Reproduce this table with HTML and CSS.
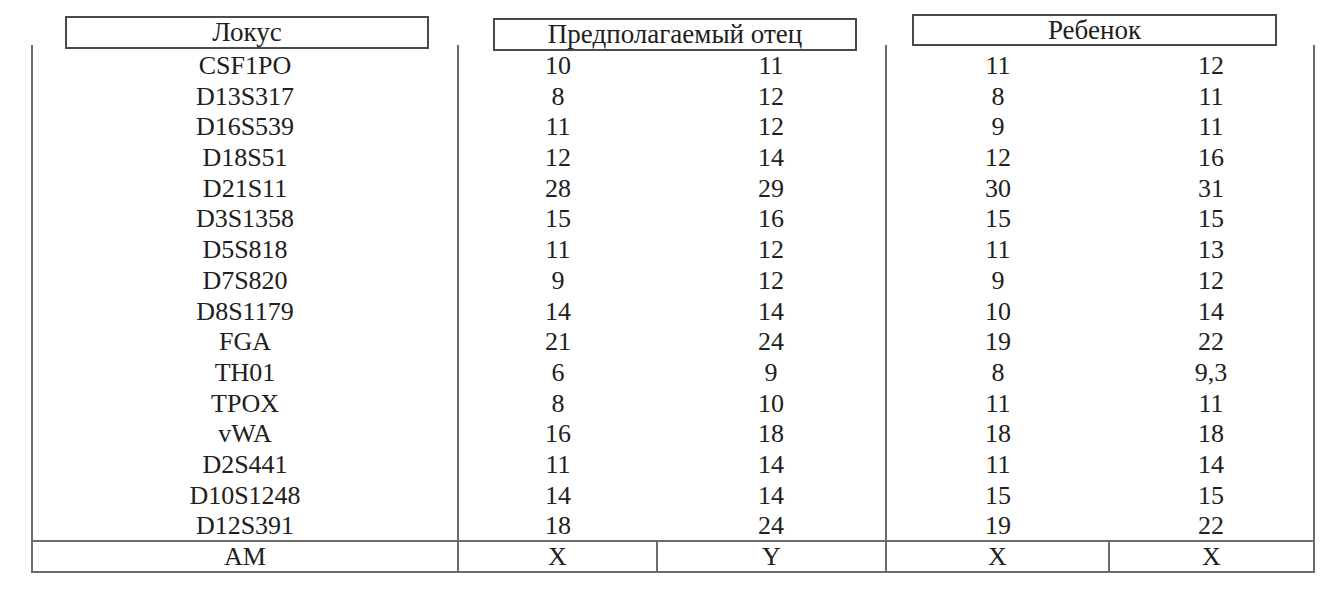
FILE: index.html
```html
<!DOCTYPE html>
<html lang="ru">
<head>
<meta charset="utf-8">
<title>Локусы</title>
<link rel="stylesheet" href="styles.css">
</head>
<body>
<div class="sheet">
  <div class="head">
    <div class="hgroup"><div class="hbox hbox-locus">Локус</div></div>
    <div class="hgroup"><div class="hbox hbox-father">Предполагаемый отец</div></div>
    <div class="hgroup"><div class="hbox hbox-child">Ребенок</div></div>
  </div>
  <div class="body">
    <div class="col col-locus">
      <div class="cell">CSF1PO</div>
      <div class="cell">D13S317</div>
      <div class="cell">D16S539</div>
      <div class="cell">D18S51</div>
      <div class="cell">D21S11</div>
      <div class="cell">D3S1358</div>
      <div class="cell">D5S818</div>
      <div class="cell">D7S820</div>
      <div class="cell">D8S1179</div>
      <div class="cell">FGA</div>
      <div class="cell">TH01</div>
      <div class="cell">TPOX</div>
      <div class="cell">vWA</div>
      <div class="cell">D2S441</div>
      <div class="cell">D10S1248</div>
      <div class="cell">D12S391</div>
    </div>
    <div class="col col-pair col-father">
      <div class="cell">10</div><div class="cell">11</div>
      <div class="cell">8</div><div class="cell">12</div>
      <div class="cell">11</div><div class="cell">12</div>
      <div class="cell">12</div><div class="cell">14</div>
      <div class="cell">28</div><div class="cell">29</div>
      <div class="cell">15</div><div class="cell">16</div>
      <div class="cell">11</div><div class="cell">12</div>
      <div class="cell">9</div><div class="cell">12</div>
      <div class="cell">14</div><div class="cell">14</div>
      <div class="cell">21</div><div class="cell">24</div>
      <div class="cell">6</div><div class="cell">9</div>
      <div class="cell">8</div><div class="cell">10</div>
      <div class="cell">16</div><div class="cell">18</div>
      <div class="cell">11</div><div class="cell">14</div>
      <div class="cell">14</div><div class="cell">14</div>
      <div class="cell">18</div><div class="cell">24</div>
    </div>
    <div class="col col-pair col-child">
      <div class="cell">11</div><div class="cell">12</div>
      <div class="cell">8</div><div class="cell">11</div>
      <div class="cell">9</div><div class="cell">11</div>
      <div class="cell">12</div><div class="cell">16</div>
      <div class="cell">30</div><div class="cell">31</div>
      <div class="cell">15</div><div class="cell">15</div>
      <div class="cell">11</div><div class="cell">13</div>
      <div class="cell">9</div><div class="cell">12</div>
      <div class="cell">10</div><div class="cell">14</div>
      <div class="cell">19</div><div class="cell">22</div>
      <div class="cell">8</div><div class="cell">9,3</div>
      <div class="cell">11</div><div class="cell">11</div>
      <div class="cell">18</div><div class="cell">18</div>
      <div class="cell">11</div><div class="cell">14</div>
      <div class="cell">15</div><div class="cell">15</div>
      <div class="cell">19</div><div class="cell">22</div>
    </div>
  </div>
  <div class="am">
    <div class="am-cell am-locus">AM</div>
    <div class="am-cell am-fa">X</div>
    <div class="am-cell am-fb">Y</div>
    <div class="am-cell am-ca">X</div>
    <div class="am-cell am-cb">X</div>
  </div>
</div>
</body>
</html>
```

FILE: styles.css
```css
html, body {
  margin: 0;
  padding: 0;
  background: #ffffff;
}

body {
  font-family: "Liberation Serif", "Times New Roman", Times, serif;
  color: #202020;
}

.sheet {
  margin-left: 31px;
  width: 1284px;
}

/* header boxes */
.head {
  display: flex;
  height: 45px;
}

.hgroup {
  width: 428px;
  flex: none;
}

.hbox {
  box-sizing: border-box;
  height: 33px;
  width: 364px;
  border: 2px solid #4a4a4a;
  background: #fff;
  font-family: "Liberation Serif", "Times New Roman", Times, serif;
  font-size: 27px;
  line-height: 29px;
  text-align: center;
  white-space: nowrap;
  position: relative;
  z-index: 1;
}

.hbox-locus {
  margin-top: 16px;
  margin-left: 34px;
}

.hbox-father {
  margin-top: 18px;
  margin-left: 34px;
}

.hbox-child {
  margin-top: 14px;
  margin-left: 25px;
  width: 365px;
  height: 32px;
  line-height: 28px;
}

/* body columns */
.body {
  display: flex;
  border-left: 2px solid #6c6c6c;
}

.col {
  box-sizing: border-box;
  flex: none;
  border-right: 2px solid #6c6c6c;
  padding-top: 4px;
}

.col-locus {
  width: 426px;
}

.col-father,
.col-child {
  width: 428px;
}

.col-pair {
  display: grid;
  align-content: start;
}

.col-father {
  grid-template-columns: 198px 228px;
}

.col-child {
  grid-template-columns: 222px 204px;
}

.cell {
  box-sizing: border-box;
  font-family: "Liberation Serif", "Times New Roman", Times, serif;
  font-size: 26px;
  height: 30.7px;
  padding-top: 4px;
  line-height: 26.7px;
  text-align: center;
  white-space: nowrap;
}

/* bottom AM row */
.am {
  display: flex;
  border-left: 2px solid #6c6c6c;
  border-top: 2px solid #6c6c6c;
  border-bottom: 2px solid #6c6c6c;
}

.am-cell {
  box-sizing: border-box;
  flex: none;
  border-right: 2px solid #6c6c6c;
  font-family: "Liberation Serif", "Times New Roman", Times, serif;
  font-size: 26px;
  height: 29px;
  padding-top: 1px;
  line-height: 28px;
  text-align: center;
}

.am-locus { width: 426px; }
.am-fa { width: 199px; }
.am-fb { width: 229px; }
.am-ca { width: 223px; }
.am-cb { width: 205px; }
```
